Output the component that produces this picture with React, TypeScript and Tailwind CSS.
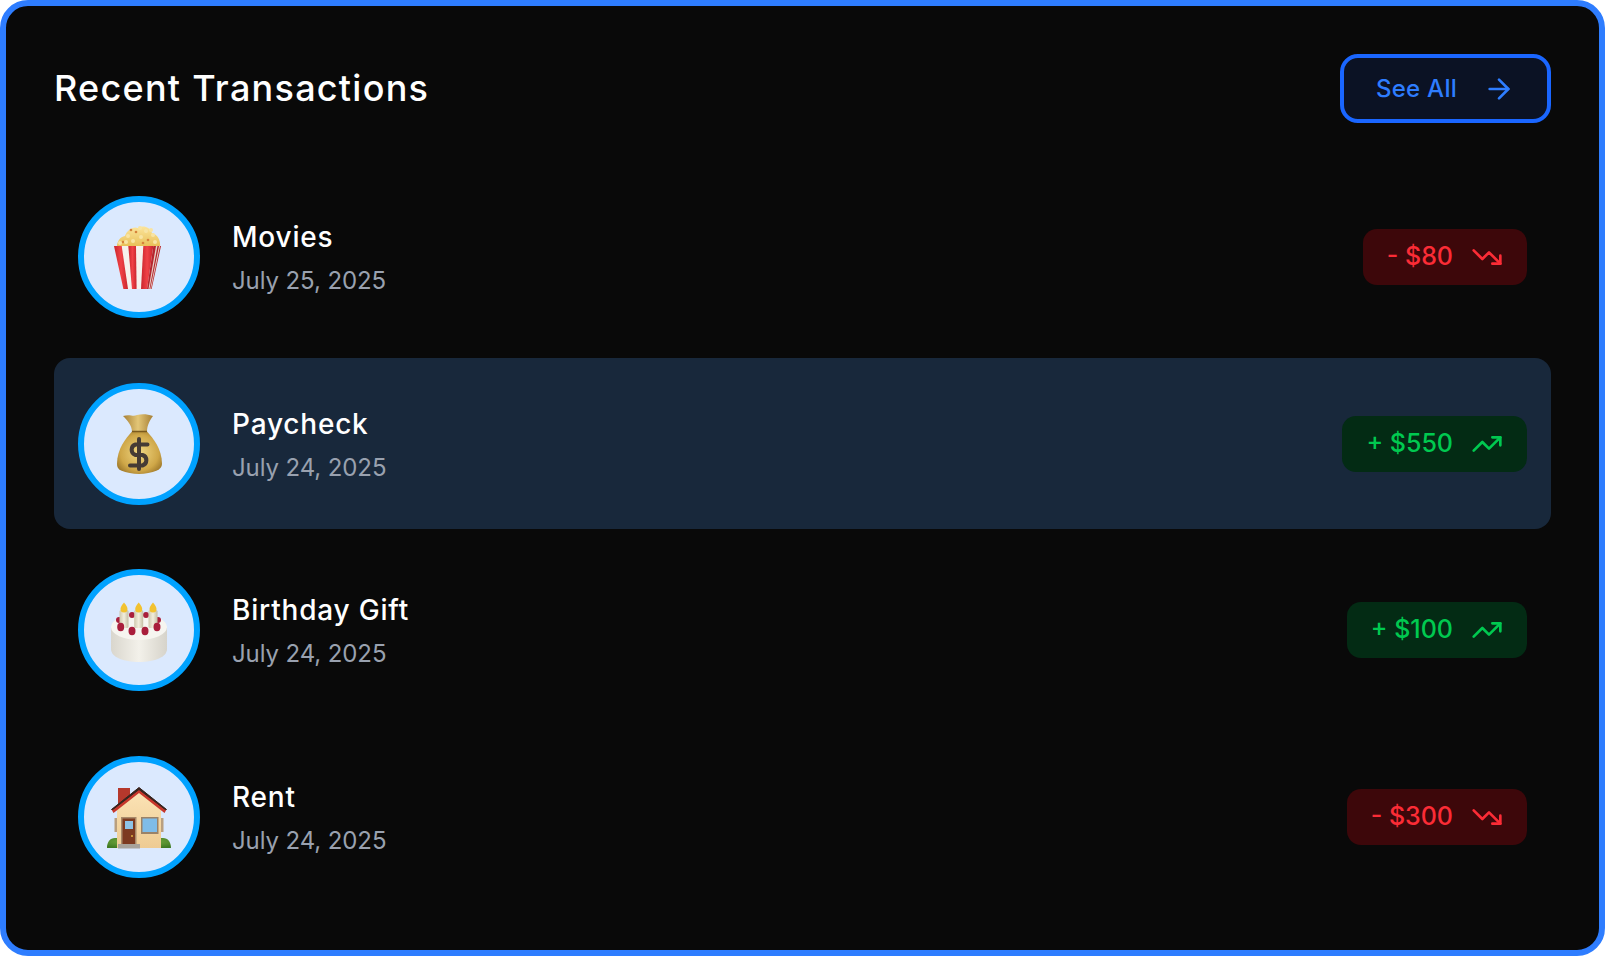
import { ArrowRight, TrendingDown, TrendingUp } from "lucide-react"

// Apple style emoji, one unit is one pixel, box is centered in the avatar circle
function Popcorn() {
  const kernels = [
    [20, 21], [25, 15], [30, 20], [33, 11], [38, 16], [43, 10], [45, 19], [50, 14], [52, 21], [28, 9], [37, 7], [17, 22], [40, 22], [23, 21], [48, 9],
  ]
  return (
    <svg viewBox="0 0 72 72" className="size-[72px]">
      <defs>
        <linearGradient id="corn" x1="0" y1="0" x2="0" y2="1">
          <stop offset="0" stopColor="#fbe49b" />
          <stop offset="1" stopColor="#e8bf55" />
        </linearGradient>
        <linearGradient id="stripe" x1="0" y1="0" x2="1" y2="0">
          <stop offset="0" stopColor="#c9252d" />
          <stop offset="0.5" stopColor="#f04246" />
          <stop offset="1" stopColor="#c9252d" />
        </linearGradient>
      </defs>
      <path d="M14 26c0-6 3-10 8-11 2-6 8-10 13-8 5-3 12-1 14 5 5 1 9 7 8 14z" fill="url(#corn)" />
      {kernels.map(([x, y], i) => (
        <circle key={i} cx={x} cy={y} r={i % 3 === 0 ? 1.3 : 2} fill={i % 3 === 0 ? "#d5833b" : "#f8e4a3"} />
      ))}
      <path d="M11 25h47l-9.400 43H20.400z" fill="#f6f1ec" />
      <path d="M11 25h7.700L25 68h-4.600z" fill="url(#stripe)" />
      <path d="M25.300 25H33l.6 43H29z" fill="url(#stripe)" />
      <path d="M40.300 25h10L44 68h-6z" fill="url(#stripe)" />
      <path d="M50.300 25H58l-9.400 43H44z" fill="#b5262e" />
      <path d="M53 25h1.500L46.500 68h-1zM56 25h1L48 68h-.8z" fill="#e6cfc6" />
    </svg>
  )
}

function MoneyBag() {
  return (
    <svg viewBox="0 0 72 72" className="size-[72px]">
      <defs>
        <radialGradient id="bag" cx="0.5" cy="0.5" r="0.65">
          <stop offset="0" stopColor="#efd682" />
          <stop offset="0.65" stopColor="#cfa748" />
          <stop offset="1" stopColor="#8f6a22" />
        </radialGradient>
        <linearGradient id="neck" x1="0" y1="0" x2="1" y2="0">
          <stop offset="0" stopColor="#a67f35" />
          <stop offset="0.5" stopColor="#e3c677" />
          <stop offset="1" stopColor="#a67f35" />
        </linearGradient>
      </defs>
      <path d="M20 8c7-2 10 1 14-1 5-1 10-1 16 1-3 4-6 9-6 16H29c0-7-5-12-9-16z" fill="url(#neck)" />
      <path d="M29 23.500h15C50 30 59 41 59 56c0 3-2 5-5 6.500-11 4.500-25 4.500-36 0-3-1.500-4-3.500-4-6.500 0-15 9-26 15-32.500z" fill="url(#bag)" />
      <path d="M29 23.500h15" stroke="#7a5a1e" strokeWidth="1.500" />
      <path d="M44.500 36.500H32.500a5.500 5.500 0 0 0 0 10.500h7a5.500 5.500 0 0 1 0 10.500H27M36 31v30" fill="none" stroke="#453b35" strokeWidth="4" strokeLinecap="round" />
    </svg>
  )
}

function Cake() {
  const candles = [21, 35.7, 50]
  const berries = [17.7, 29, 42, 54]
  return (
    <svg viewBox="0 0 72 72" className="size-[72px]">
      <defs>
        <linearGradient id="cakeSide" x1="0" y1="0" x2="1" y2="0">
          <stop offset="0" stopColor="#d9d6cd" />
          <stop offset="0.5" stopColor="#f3f1ea" />
          <stop offset="1" stopColor="#d6d3ca" />
        </linearGradient>
        <linearGradient id="candle" x1="0" y1="0" x2="1" y2="0">
          <stop offset="0" stopColor="#cfc8ae" />
          <stop offset="0.5" stopColor="#f2eedd" />
          <stop offset="1" stopColor="#c4bda3" />
        </linearGradient>
      </defs>
      <path d="M8 34v21c0 8 12 13 28 13s28-5 28-13V34z" fill="url(#cakeSide)" />
      <ellipse cx="36" cy="33" rx="28" ry="13" fill="#f6f5f0" />
      <circle cx="16" cy="26" r="3" fill="#a91e3c" />
      <circle cx="29" cy="21" r="3" fill="#a91e3c" />
      <circle cx="43" cy="21" r="3" fill="#a91e3c" />
      <circle cx="55" cy="26" r="3" fill="#a91e3c" />
      {candles.map((x) => (
        <g key={x}>
          <rect x={x - 4.500} y="16" width="9" height="18" rx="1.500" fill="url(#candle)" />
          <path d={`M${x} 8.500c2.500 3 3.500 5 3.500 6.500a3.500 3.500 0 0 1-7 0c0-1.500 1-3.500 3.500-6.500z`} fill="#f2c230" />
        </g>
      ))}
      {berries.map((x, i) => (
        <ellipse key={x} cx={x} cy={i === 0 || i === 3 ? 33 : 37} rx="3.500" ry="4.200" fill="#a91e3c" />
      ))}
    </svg>
  )
}

function House() {
  return (
    <svg viewBox="0 0 72 72" className="size-[72px]">
      <defs>
        <linearGradient id="wall" x1="0" y1="0" x2="0" y2="1">
          <stop offset="0" stopColor="#fbe3b5" />
          <stop offset="1" stopColor="#eecb93" />
        </linearGradient>
        <radialGradient id="bush" cx="0.5" cy="0.35" r="0.7">
          <stop offset="0" stopColor="#86bb4a" />
          <stop offset="1" stopColor="#3f7a22" />
        </radialGradient>
      </defs>
      <path d="M4 67c0-6 3-10 8-10h4v10zM68 67c0-6-3-10-8-10h-4v10z" fill="url(#bush)" />
      <rect x="15" y="7" width="12" height="18" fill="#b5382c" />
      <path d="M14 28L36 11l22 17v39H14z" fill="url(#wall)" />
      <path d="M8.500 28.500L36 6.500l27.500 22-2 3.500L36 12 10.500 32z" fill="#c6362b" />
      <path d="M8.500 28.500L36 6.500l27.500 22-2-.5L36 8.500 10.500 28z" fill="#35251f" stroke="#35251f" />
      <rect x="11.500" y="37" width="2.500" height="14" fill="#b99f7f" />
      <rect x="58" y="37" width="2.500" height="14" fill="#b99f7f" />
      <rect x="18" y="36" width="15.500" height="27" fill="#a88a6a" />
      <rect x="19.500" y="37.500" width="12.500" height="25.500" fill="#7c3a20" />
      <rect x="22" y="40" width="8" height="8" fill="#8ec3e6" />
      <circle cx="29" cy="55" r="1" fill="#e0b040" />
      <rect x="38" y="36" width="17.500" height="17" fill="#9a8268" />
      <rect x="39.500" y="37.500" width="14.500" height="13.500" fill="#7fbce8" />
      <rect x="15" y="63" width="22" height="4.500" fill="#a7a29a" />
    </svg>
  )
}

const transactions = [
  { Icon: Popcorn, name: "Movies", date: "July 25, 2025", amount: "- $80", up: false, active: false },
  { Icon: MoneyBag, name: "Paycheck", date: "July 24, 2025", amount: "+ $550", up: true, active: true },
  { Icon: Cake, name: "Birthday Gift", date: "July 24, 2025", amount: "+ $100", up: true, active: false },
  { Icon: House, name: "Rent", date: "July 24, 2025", amount: "- $300", up: false, active: false },
]

export default function App() {
  return (
    <main className="h-[956px] w-[1605px] rounded-[28px] border-[6px] border-[#2e7dff] bg-[#090909] p-12 font-['Inter',sans-serif] text-white">
      <div className="mb-[48.75px] flex h-[69px] items-center justify-between">
        <h2 className="-mt-0.5 text-[36px] font-medium tracking-[1.25px]">Recent Transactions</h2>
        <button className="flex h-[69px] w-[211px] items-center justify-center gap-[26px] rounded-[18px] border-4 border-[#1a66ff] bg-[#0b1224] text-[24px] font-medium tracking-[0.25px] text-[#2e7dff]">
          See All
          <ArrowRight size={32} strokeWidth={2} />
        </button>
      </div>
      <div className="flex flex-col gap-4">
        {transactions.map((t) => (
          <div
            key={t.name}
            className={`flex h-[170.5px] items-center justify-between rounded-2xl p-6 ${t.active ? "bg-[#18283b]" : ""}`}
          >
            <div className="flex items-center gap-8">
              <div className="flex size-[122px] items-center justify-center rounded-full border-[6px] border-[#00a2ff] bg-[#dbe9fe]">
                <t.Icon />
              </div>
              <div className="flex flex-col gap-2 pt-1">
                <span className="text-[28px] font-medium leading-9 tracking-[0.8px]">{t.name}</span>
                <span className="text-[24px] leading-9 tracking-[-0.1px] text-[#99a1af]">{t.date}</span>
              </div>
            </div>
            <div
              className={`flex h-14 items-center gap-[18px] rounded-[14px] px-6 text-[25px] font-medium ${t.up ? "bg-[#032b14] text-[#00c950]" : "bg-[#3d070a] text-[#fb2c36]"}`}
            >
              {t.amount}
              {t.up ? <TrendingUp size={32} /> : <TrendingDown size={32} />}
            </div>
          </div>
        ))}
      </div>
    </main>
  )
}
